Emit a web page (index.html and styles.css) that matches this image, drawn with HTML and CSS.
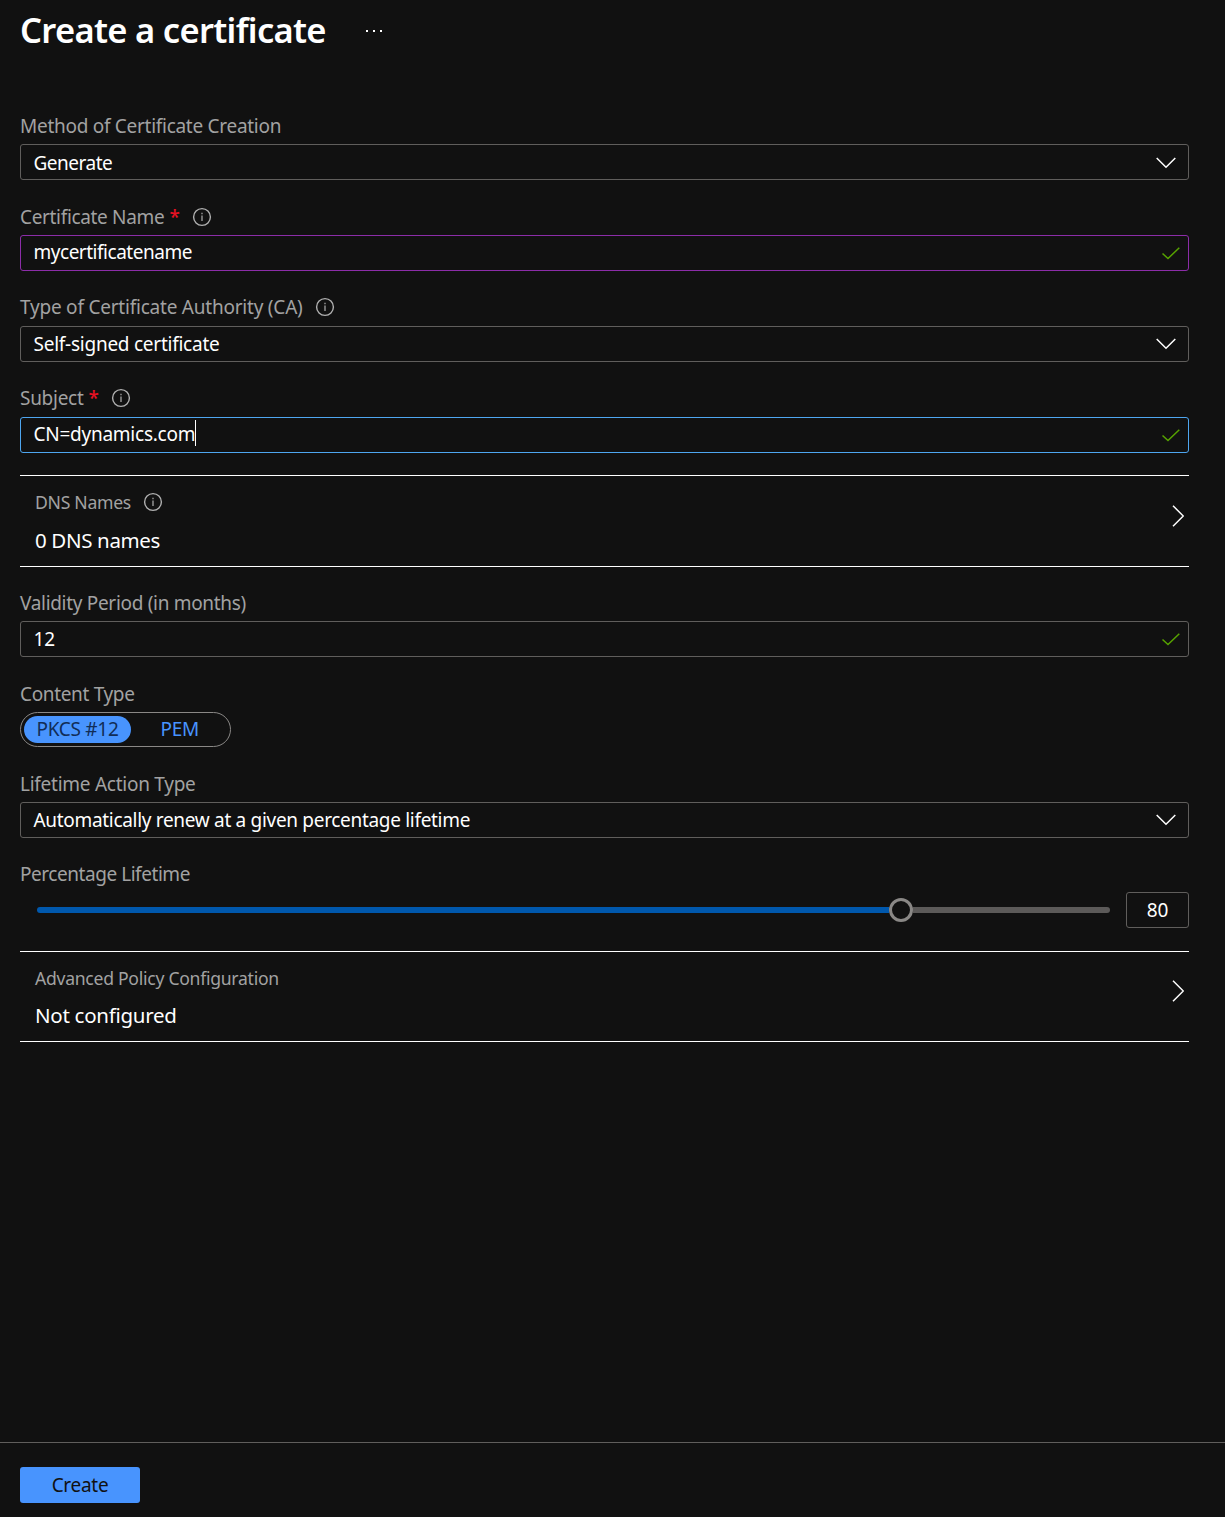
FILE: index.html
```html
<!DOCTYPE html>
<html lang="en">
<head>
<meta charset="utf-8">
<title>Create a certificate</title>
<link rel="stylesheet" href="styles.css">
</head>
<body>
<svg class="sprite" aria-hidden="true">
  <symbol id="down" viewBox="0 0 20 12"><path d="M.7 1 10 10.300 19.300 1"/></symbol>
  <symbol id="check" viewBox="0 0 18 13"><path d="M.5 6.500 6 11.500 17.300.8"/></symbol>
  <symbol id="right" viewBox="0 0 12 22"><path d="M1 .8 11.300 11 1 21.200"/></symbol>
  <symbol id="info" viewBox="0 0 20 20"><circle cx="10" cy="10" r="8.400"/><path class="i" d="M10 8.600V14M10 5.700V7.200"/></symbol>
</svg>
<main class="blade">
  <header class="head"><h1><span class="t">Create a certificate</span></h1><span class="more"><i></i><i></i><i></i></span></header>
  <form class="form">
    <div class="field"><label><span class="t w-method">Method of Certificate Creation</span></label>
      <div class="control low"><span class="t w-generate">Generate</span><svg class="down"><use href="#down"/></svg></div></div>
    <div class="field"><label><span class="t w-name">Certificate Name</span><b class="req">*</b><svg class="info"><use href="#info"/></svg></label>
      <div class="control high purple"><span class="t w-cert">mycertificatename</span><svg class="check"><use href="#check"/></svg></div></div>
    <div class="field"><label class="up"><span class="t w-type">Type of Certificate Authority (CA)</span><svg class="info"><use href="#info"/></svg></label>
      <div class="control"><span class="t w-self">Self-signed certificate</span><svg class="down"><use href="#down"/></svg></div></div>
    <div class="field"><label class="up"><span class="t w-subject">Subject</span><b class="req">*</b><svg class="info"><use href="#info"/></svg></label>
      <div class="control high blue"><span class="t w-cn">CN=dynamics.com</span><span class="caret"></span><svg class="check"><use href="#check"/></svg></div></div>
    <section class="link dns"><div><p class="sub"><span class="t w-dns">DNS Names</span><svg class="info"><use href="#info"/></svg></p><p class="val"><span class="t w-zero">0 DNS names</span></p></div><svg class="right"><use href="#right"/></svg></section>
    <div class="field after"><label><span class="t w-valid">Validity Period (in months)</span></label>
      <div class="control"><span class="t w-12">12</span><svg class="check"><use href="#check"/></svg></div></div>
    <div class="field"><label><span class="t w-content">Content Type</span></label>
      <div class="toggle"><span class="on"><span class="t w-pkcs">PKCS #12</span></span><span class="off"><span class="t w-pem">PEM</span></span></div></div>
    <div class="field tight"><label><span class="t w-life">Lifetime Action Type</span></label>
      <div class="control"><span class="t w-auto">Automatically renew at a given percentage lifetime</span><svg class="down"><use href="#down"/></svg></div></div>
    <div class="field last"><label><span class="t w-perc">Percentage Lifetime</span></label>
      <div class="slider"><div class="track"><span class="fill"></span><span class="thumb"></span><span class="rest"></span></div><div class="num"><span class="t w-80">80</span></div></div></div>
    <section class="link adv"><div><p class="sub"><span class="t w-adv">Advanced Policy Configuration</span></p><p class="val"><span class="t w-not">Not configured</span></p></div><svg class="right"><use href="#right"/></svg></section>
  </form>
  <footer><button type="button"><span class="t">Create</span></button></footer>
</main>
</body>
</html>
```
FILE: styles.css
```css
* { box-sizing: border-box; }
body { margin: 0; background: #111; color: #fff; font-family: "Noto Sans", "Open Sans", sans-serif; font-size: 19px; line-height: 28px; }
h1, p { margin: 0; }
svg { display: block; fill: none; stroke: #fff; stroke-width: 1.500; flex: none; overflow: visible; }
.sprite { position: absolute; width: 0; height: 0; }
.t { white-space: nowrap; letter-spacing: -.28px; }
.blade { height: 1517px; display: flex; flex-direction: column; overflow: hidden; }
.head { display: flex; align-items: center; height: 62px; padding-left: 20px; }
h1 { font-size: 34.500px; font-weight: 600; line-height: 60px; height: 62px; width: 346px; }
h1 .t { letter-spacing: -.68px; }
.more { display: flex; gap: 5px; }
.more i { width: 2px; height: 2px; background: #fff; }
.form { width: 1189px; padding: 50px 0 0 20px; }
.field { margin-bottom: 23px; }
.tight { margin-bottom: 22px; }
.last { margin-bottom: 24px; }
label { display: flex; align-items: center; height: 28px; margin-bottom: 4px; color: #a2a2a2; }
.up { padding-bottom: 2px; }
.req { color: #e81123; font-weight: 500; margin-left: 5px; }
.info { width: 20px; height: 20px; margin-left: 12.500px; stroke: #b0b0b0; stroke-width: 1.400; }
.i { stroke: #999; }
.control { display: flex; align-items: center; height: 36px; border: 1px solid #605e5c; border-radius: 3px; padding: 0 12px 0 12.500px; }
.low { padding-top: 2px; }
.high .t { margin-top: -2px; }
.purple { border-color: #8c2da8; }
.blue { border-color: #4ea6f0; }
.down { width: 20px; height: 12px; margin-left: auto; }
.check { width: 18px; height: 13px; margin: 0 -4px 0 auto; stroke: #57a300; }
.caret { width: 1px; height: 26px; background: #fff; margin-top: -4px; }
.link { display: flex; justify-content: space-between; border: solid #fff; border-width: 1px 0; padding: 12px 5px 0 15px; height: 92px; margin-top: -1px; }
.adv { height: 91px; }
.sub { display: flex; align-items: center; height: 28px; font-size: 17.600px; color: #a2a2a2; }
.val { font-size: 20.500px; margin-top: 10px; }
.adv .val { margin-top: 9px; }
.right { width: 12px; height: 22px; margin-top: 17px; }
.adv .right { margin-top: 16px; }
.after { margin-top: 22px; }
.toggle { display: flex; width: 211px; height: 35px; border: 1px solid #8a8886; border-radius: 18px; padding: 3px; }
.on { width: 107px; height: 27px; border-radius: 14px; background: #4894fe; color: #112d57; text-align: center; line-height: 26px; }
.off { color: #4894fe; padding-left: 29.500px; line-height: 26px; }
.slider { display: flex; height: 36px; padding-left: 17px; }
.track { display: flex; align-items: center; width: 1073px; }
.fill { width: 852.300px; height: 6px; border-radius: 3px 0 0 3px; background: #0058ad; }
.thumb { width: 24px; height: 24px; border: 3px solid #8a8886; border-radius: 50%; }
.rest { flex: 1; height: 6px; border-radius: 0 3px 3px 0; background: #5c5a59; }
.num { width: 63px; margin-left: auto; border: 1px solid #605e5c; border-radius: 3px; text-align: center; line-height: 34px; }
footer { margin-top: auto; height: 75px; border-top: 1px solid #605e5c; padding: 24px 20px; flex: none; }
button { width: 120px; height: 36px; border: 0; border-radius: 3px; background: #4894fe; color: #111; font: inherit; padding: 0; }

/* Per-string tracking */
.w-generate { letter-spacing: -.5px; }
.w-name { letter-spacing: -.33px; }
.w-cert { letter-spacing: -.48px; }
.w-type { letter-spacing: -.22px; }
.w-self { letter-spacing: -.25px; }
.w-cn { letter-spacing: -.25px; }
.w-zero { letter-spacing: -.35px; }
.w-valid { letter-spacing: -.31px; }
.w-content { letter-spacing: -.34px; }
.w-life { letter-spacing: -.26px; }
.w-auto { letter-spacing: -.31px; }
.w-perc { letter-spacing: -.45px; }
.w-12, .w-80 { letter-spacing: 0; }
```
